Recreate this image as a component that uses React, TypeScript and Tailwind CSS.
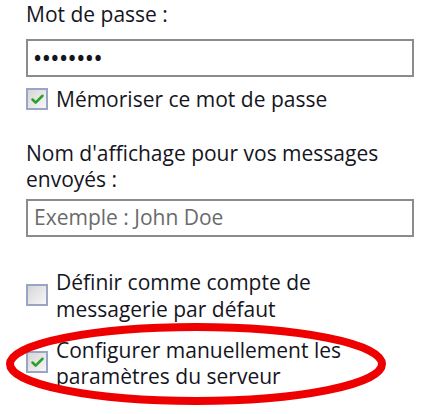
import { Check } from 'lucide-react'

const CheckBox = ({ checked, className = '' }: { checked?: boolean; className?: string }) => (
  <span
    className={`flex h-[22px] w-[22px] shrink-0 items-center justify-center border-2 border-[#9aa5c6] bg-gradient-to-br from-[#d6d6d6] to-[#f7f7f7] ${className}`}
  >
    {checked && <Check className="h-[15px] w-[15px] text-[#2aa02a]" strokeWidth={4} />}
  </span>
)

export default function App() {
  return (
    <div className="relative h-[414px] w-[440px] overflow-hidden bg-white font-['Open_Sans',sans-serif] text-[21px] font-medium text-[#15151d]">
      <div className="flex w-[414px] flex-col pl-[26px]">
        <p className="mt-[1px] leading-[26px]">Mot de passe :</p>
        <div className="mt-[12px] flex h-[38px] items-center border-2 border-[#8c8c8c] pl-[6px]">
          <span className="text-[19px] font-bold tracking-[1.5px]">••••••••</span>
        </div>
        <label className="mt-[10px] flex items-center gap-[8px] leading-[24px]">
          <CheckBox checked />
          Mémoriser ce mot de passe
        </label>

        <p className="mt-[29px] leading-[26px]">
          Nom d'affichage pour vos messages
          <br />
          envoyés :
        </p>
        <div className="mt-[7px] flex h-[38px] items-center border-2 border-[#8c8c8c] pl-[6px]">
          <span className="font-normal text-[#6a6a6a]">Exemple : John Doe</span>
        </div>

        <label className="mt-[32px] flex items-start gap-[8px] leading-[27px]">
          <CheckBox className="mt-[15px]" />
          <span>
            Définir comme compte de
            <br />
            messagerie par défaut
          </span>
        </label>
        <label className="mt-[14px] flex items-start gap-[8px] leading-[26px]">
          <CheckBox checked className="mt-[14px]" />
          <span>
            Configurer manuellement les
            <br />
            paramètres du serveur
          </span>
        </label>
      </div>

      <svg className="pointer-events-none absolute left-0 top-0" width="440" height="414">
        <ellipse cx="196" cy="364" rx="186" ry="37" fill="none" stroke="#ee0000" strokeWidth="8" />
      </svg>
    </div>
  )
}
